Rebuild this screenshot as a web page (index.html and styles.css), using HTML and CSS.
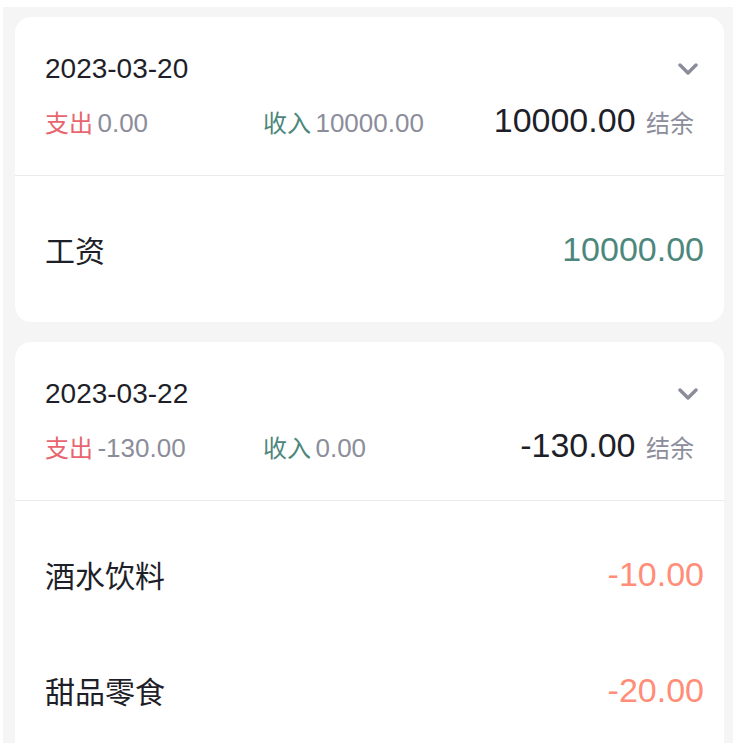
FILE: index.html
```html
<!DOCTYPE html>
<html>
<head>
    <meta charset="UTF-8">
    <meta name="viewport" content="width=device-width, initial-scale=1.0">
    <title>账单明细</title>
    <link rel="stylesheet" href="styles.css">
</head>
<body>
    <div class="bill-list">
        <div class="day-card">
            <div class="day-header">
                <div class="date-row">
                    <span class="date">2023-03-20</span>
                    <svg class="arrow" width="20" height="12" viewBox="0 0 20 12"><path d="M2 2 L10 10 L18 2" fill="none" stroke="#8b8c99" stroke-width="3.4" stroke-linecap="round" stroke-linejoin="round"/></svg>
                </div>
                <div class="summary">
                    <div class="sum-col"><span class="label pay">支出</span> <span class="num">0.00</span></div>
                    <div class="sum-col"><span class="label income">收入</span> <span class="num">10000.00</span></div>
                    <div class="balance"><span class="balance-num">10000.00</span> <span class="balance-label">结余</span></div>
                </div>
            </div>
            <div class="items">
                <div class="item">
                    <span class="item-name">工资</span>
                    <span class="item-money income">10000.00</span>
                </div>
            </div>
        </div>

        <div class="day-card">
            <div class="day-header">
                <div class="date-row">
                    <span class="date">2023-03-22</span>
                    <svg class="arrow" width="20" height="12" viewBox="0 0 20 12"><path d="M2 2 L10 10 L18 2" fill="none" stroke="#8b8c99" stroke-width="3.4" stroke-linecap="round" stroke-linejoin="round"/></svg>
                </div>
                <div class="summary">
                    <div class="sum-col"><span class="label pay">支出</span> <span class="num">-130.00</span></div>
                    <div class="sum-col"><span class="label income">收入</span> <span class="num">0.00</span></div>
                    <div class="balance"><span class="balance-num">-130.00</span> <span class="balance-label">结余</span></div>
                </div>
            </div>
            <div class="items">
                <div class="item">
                    <span class="item-name">酒水饮料</span>
                    <span class="item-money pay">-10.00</span>
                </div>
                <div class="item">
                    <span class="item-name">甜品零食</span>
                    <span class="item-money pay">-20.00</span>
                </div>
            </div>
        </div>
    </div>
</body>
</html>
```

FILE: styles.css
```css
body {
    margin: 0;
    background-color: #fff;
    font-family: "Liberation Sans", "Noto Sans CJK SC", sans-serif;
    color: #1e1f29;
}
.bill-list {
    margin: 7px 0 0 3px;
    height: 736px;
    box-sizing: border-box;
    padding: 10px 9px 0 12px;
    background-color: #f5f5f5;
    overflow: hidden;
}
.day-card {
    background-color: #fff;
    border-radius: 16px;
    margin-bottom: 20px;
}
.day-header {
    padding: 32px 30px 31px 30px;
    border-bottom: 1px solid #ebebeb;
}
.date-row {
    display: flex;
    justify-content: space-between;
    align-items: center;
    height: 40px;
}
.date {
    font-size: 28px;
}
.arrow {
    margin-right: -4px;
}
.summary {
    display: grid;
    grid-template-columns: 218px 218px 1fr;
    align-items: baseline;
    margin-top: 7px;
    height: 48px;
    line-height: 48px;
}
.label {
    font-size: 24px;
}
.num {
    font-size: 26px;
    color: #8c8d9b;
}
.pay {
    color: #e8646f;
}
.income {
    color: #4d877c;
}
.balance {
    text-align: right;
}
.balance-num {
    font-size: 34px;
    color: #1e1f29;
}
.balance-label {
    font-size: 24px;
    color: #8c8d9b;
    margin-left: 6px;
}
.items {
    padding: 15px 20px 15px 30px;
}
.item {
    display: flex;
    justify-content: space-between;
    align-items: center;
    height: 116px;
}
.item-name {
    font-size: 30px;
}
.item-money {
    font-size: 34px;
}
.item-money.pay {
    color: #ff8d78;
}
```
